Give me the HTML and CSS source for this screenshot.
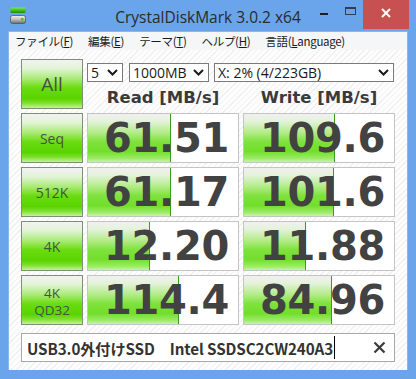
FILE: index.html
```html
<!DOCTYPE html>
<html lang="ja">
<head>
<meta charset="utf-8">
<title>CrystalDiskMark 3.0.2 x64</title>
<link rel="stylesheet" href="styles.css">
</head>
<body>
<div class="window">
  <div class="titlebar">
    <div class="tb-left">
      <svg class="appicon" width="16" height="17" viewBox="0 0 16 17">
        <defs>
          <linearGradient id="gbar" x1="0" y1="0" x2="0" y2="1">
            <stop offset="0" stop-color="#7be85a"/>
            <stop offset="0.5" stop-color="#3fc21a"/>
            <stop offset="1" stop-color="#1e8a10"/>
          </linearGradient>
          <linearGradient id="gdisk" x1="0" y1="0" x2="0" y2="1">
            <stop offset="0" stop-color="#f2f2f2"/>
            <stop offset="0.45" stop-color="#c4c4c4"/>
            <stop offset="1" stop-color="#6a6a6a"/>
          </linearGradient>
        </defs>
        <rect x="0.5" y="0.5" width="15" height="5.5" rx="1" fill="url(#gbar)"/>
        <rect x="0.5" y="8.5" width="15" height="8" rx="2" fill="url(#gdisk)" stroke="#555" stroke-width="0.8"/>
        <rect x="11" y="11" width="2.5" height="2.5" fill="#3ccc18"/>
      </svg>
    </div>
    <div class="title">CrystalDiskMark 3.0.2 x64</div>
    <div class="tb-right">
      <div class="ctl ctl-min"><span class="min-line"></span></div>
      <div class="ctl ctl-max"><span class="max-box"></span></div>
      <div class="ctl ctl-close">
        <svg width="10" height="10" viewBox="0 0 10 10"><path d="M1 1 L9 9 M9 1 L1 9" stroke="#fff" stroke-width="2"/></svg>
      </div>
    </div>
  </div>
  <div class="client">
    <div class="menubar">
      <span class="mi">ファイル(<u>F</u>)</span>
      <span class="mi">編集(<u>E</u>)</span>
      <span class="mi">テーマ(<u>T</u>)</span>
      <span class="mi">ヘルプ(<u>H</u>)</span>
      <span class="mi">言語(<u>L</u>anguage)</span>
    </div>
    <div class="main">
      <div class="grid">
        <div class="btn btn-all">All</div>
        <div class="selects">
          <div class="sel sel-count"><span>5</span><svg class="chev" width="11" height="7" viewBox="0 0 11 7"><path d="M1 1 L5.5 5.5 L10 1" fill="none" stroke="#1a1a1a" stroke-width="2"/></svg></div>
          <div class="sel sel-size"><span>1000MB</span><svg class="chev" width="11" height="7" viewBox="0 0 11 7"><path d="M1 1 L5.5 5.5 L10 1" fill="none" stroke="#1a1a1a" stroke-width="2"/></svg></div>
          <div class="sel sel-drive"><span>X: 2% (4/223GB)</span><svg class="chev" width="11" height="7" viewBox="0 0 11 7"><path d="M1 1 L5.5 5.5 L10 1" fill="none" stroke="#1a1a1a" stroke-width="2"/></svg></div>
        </div>
        <div class="head">Read [MB/s]</div>
        <div class="head">Write [MB/s]</div>

        <div class="btn btn-label">Seq</div>
        <div class="res"><div class="bar" style="width:83px"></div><span class="val">61.51</span></div>
        <div class="res"><div class="bar" style="width:91px"></div><span class="val">109.6</span></div>

        <div class="btn btn-label">512K</div>
        <div class="res"><div class="bar" style="width:83px"></div><span class="val">61.17</span></div>
        <div class="res"><div class="bar" style="width:90px"></div><span class="val">101.6</span></div>

        <div class="btn btn-label">4K</div>
        <div class="res"><div class="bar" style="width:62px"></div><span class="val">12.20</span></div>
        <div class="res"><div class="bar" style="width:62px"></div><span class="val">11.88</span></div>

        <div class="btn btn-label btn-two"><span class="ln">4K</span><span class="ln">QD32</span></div>
        <div class="res"><div class="bar" style="width:91px"></div><span class="val">114.4</span></div>
        <div class="res"><div class="bar" style="width:88px"></div><span class="val">84.96</span></div>
      </div>
      <div class="comment">
        <span class="ctext">USB3.0外付けSSD　Intel SSDSC2CW240A3</span><span class="caret"></span>
        <span class="cclose">
          <svg width="13" height="13" viewBox="0 0 13 13"><path d="M1.5 1.5 L11.5 11.5 M11.5 1.5 L1.5 11.5" stroke="#3a3a3a" stroke-width="2.2"/></svg>
        </span>
      </div>
    </div>
  </div>
</div>
</body>
</html>
```
FILE: styles.css
```css
* { box-sizing: border-box; }
html, body { margin: 0; padding: 0; }
body { width: 416px; height: 379px; overflow: hidden; background: #6aa4ea; }

.window {
  width: 416px;
  height: 379px;
  background: #6aa4ea;
  display: flex;
  flex-direction: column;
  padding-bottom: 9px;
}

.titlebar {
  height: 31px;
  display: grid;
  grid-template-columns: 1fr auto 1fr;
  align-items: start;
}
.tb-left { padding-left: 10px; padding-top: 7px; display: flex; }
.appicon { display: block; }
.title {
  font-family: "Open Sans", "DejaVu Sans", sans-serif;
  font-size: 15.5px;
  color: #2a2a2a;
  line-height: 20px;
  padding-top: 7px;
  white-space: nowrap;
}
.tb-right { display: flex; justify-content: flex-end; padding-right: 7px; }
.ctl { height: 29px; display: flex; align-items: center; justify-content: center; }
.ctl-min, .ctl-max { width: 26px; }
.min-line { display: block; width: 8px; height: 2px; background: #1e1e1e; }
.max-box { display: block; width: 11px; height: 8px; border: 1px solid #2d3e55; border-top-width: 2px; margin-top: -7px; }
.ctl-min .min-line { margin-top: -2px; }
.ctl-close { width: 46px; background: #c75050; }
.ctl-close svg { display: block; margin-top: -4px; }

.client {
  flex: 1;
  margin: 0 8px;
  display: flex;
  flex-direction: column;
  background: #fcfcfc;
  border: 1px solid #8cb6ea;
  border-bottom: none;
}

.menubar {
  height: 18px;
  background: #f5f6f7;
  display: flex;
  align-items: center;
  padding-left: 6px;
  font-family: "Noto Sans CJK JP", sans-serif;
  font-size: 11.5px;
  color: #1a1a1a;
  white-space: nowrap;
}
.mi { margin-right: 15px; letter-spacing: -0.3px; }
.mi u { text-decoration: underline; text-underline-offset: 1px; }

.main {
  flex: 1;
  padding: 9px 12px 0 12px;
  background-color: #fdfdfd;
  background-image: repeating-linear-gradient(135deg, #fdfdfd 0, #fdfdfd 3px, #f0f0f0 3px, #f0f0f0 4px);
  display: flex;
  flex-direction: column;
}

.grid {
  display: grid;
  grid-template-columns: 62px 152px 152px;
  grid-template-rows: 23px 23px repeat(4, 50px);
  column-gap: 4px;
  row-gap: 4px;
}

.btn {
  border: 1px solid #7e8e78;
  background: linear-gradient(to bottom, #f2f2f2 0%, #e2f4d6 18%, #a6ea70 40%, #6adc10 58%, #5ad400 80%, #7ee030 90%, #c4f29c 100%);
  display: flex;
  flex-direction: column;
  align-items: center;
  justify-content: center;
  text-align: center;
  font-family: "Open Sans", "DejaVu Sans", sans-serif;
  color: #465240;
}
.btn-all { grid-row: 1 / span 2; font-size: 19px; }
.btn-label { font-size: 14px; line-height: 17px; }
.btn-two { padding-top: 3px; }
.ln { display: block; height: 17px; line-height: 17px; font-size: 13.5px; }

.selects {
  grid-column: 2 / span 2;
  display: flex;
  align-items: flex-start;
  padding-top: 4px;
}
.sel {
  height: 19px;
  border: 1px solid #7a7a7a;
  background: #fff;
  display: flex;
  align-items: center;
  justify-content: space-between;
  padding: 0 4px 0 3px;
  font-family: "Open Sans", "DejaVu Sans", sans-serif;
  font-size: 14px;
  color: #1a1a1a;
  white-space: nowrap;
}
.sel span { line-height: 17px; }
.sel-count { width: 36px; margin-right: 6px; }
.sel-size { width: 80px; margin-right: 5px; }
.sel-drive { width: 180px; }
.chev { display: block; flex: none; }

.head {
  font-family: "DejaVu Sans", Verdana, sans-serif;
  font-weight: bold;
  font-size: 16.5px;
  color: #3a3a3a;
  text-align: center;
  line-height: 23px;
  white-space: nowrap;
}

.res {
  position: relative;
  border: 1px solid #c4c4c4;
  background: #fff;
  display: flex;
  align-items: center;
  justify-content: flex-end;
  padding-right: 9px;
  overflow: hidden;
}
.bar {
  position: absolute;
  left: 0;
  top: 0;
  bottom: 0;
  border-right: 1px solid #3e9a1c;
  background: linear-gradient(to bottom, #f0f0f0 0%, #e4f2da 15%, #b4ec8a 38%, #7ee23c 58%, #72de2a 78%, #9aea66 92%, #c8f4a8 100%);
}
.val {
  position: relative;
  font-family: "DejaVu Sans", Verdana, sans-serif;
  font-weight: bold;
  font-size: 40px;
  line-height: 46px;
  color: #424242;
  letter-spacing: -0.3px;
}

.comment {
  margin-top: 8px;
  height: 29px;
  width: 374px;
  border: 1px solid #a8a8a8;
  background: #fff;
  display: flex;
  align-items: center;
  padding-left: 5px;
  padding-right: 8px;
  font-family: "Noto Sans CJK JP", sans-serif;
  font-weight: bold;
  font-size: 15.2px;
  color: #333;
  white-space: nowrap;
}
.ctext { letter-spacing: -0.1px; }
.caret { display: block; width: 1px; height: 23px; background: #000; margin-left: 1px; }
.cclose { margin-left: auto; display: flex; }
.cclose svg { display: block; }
```
